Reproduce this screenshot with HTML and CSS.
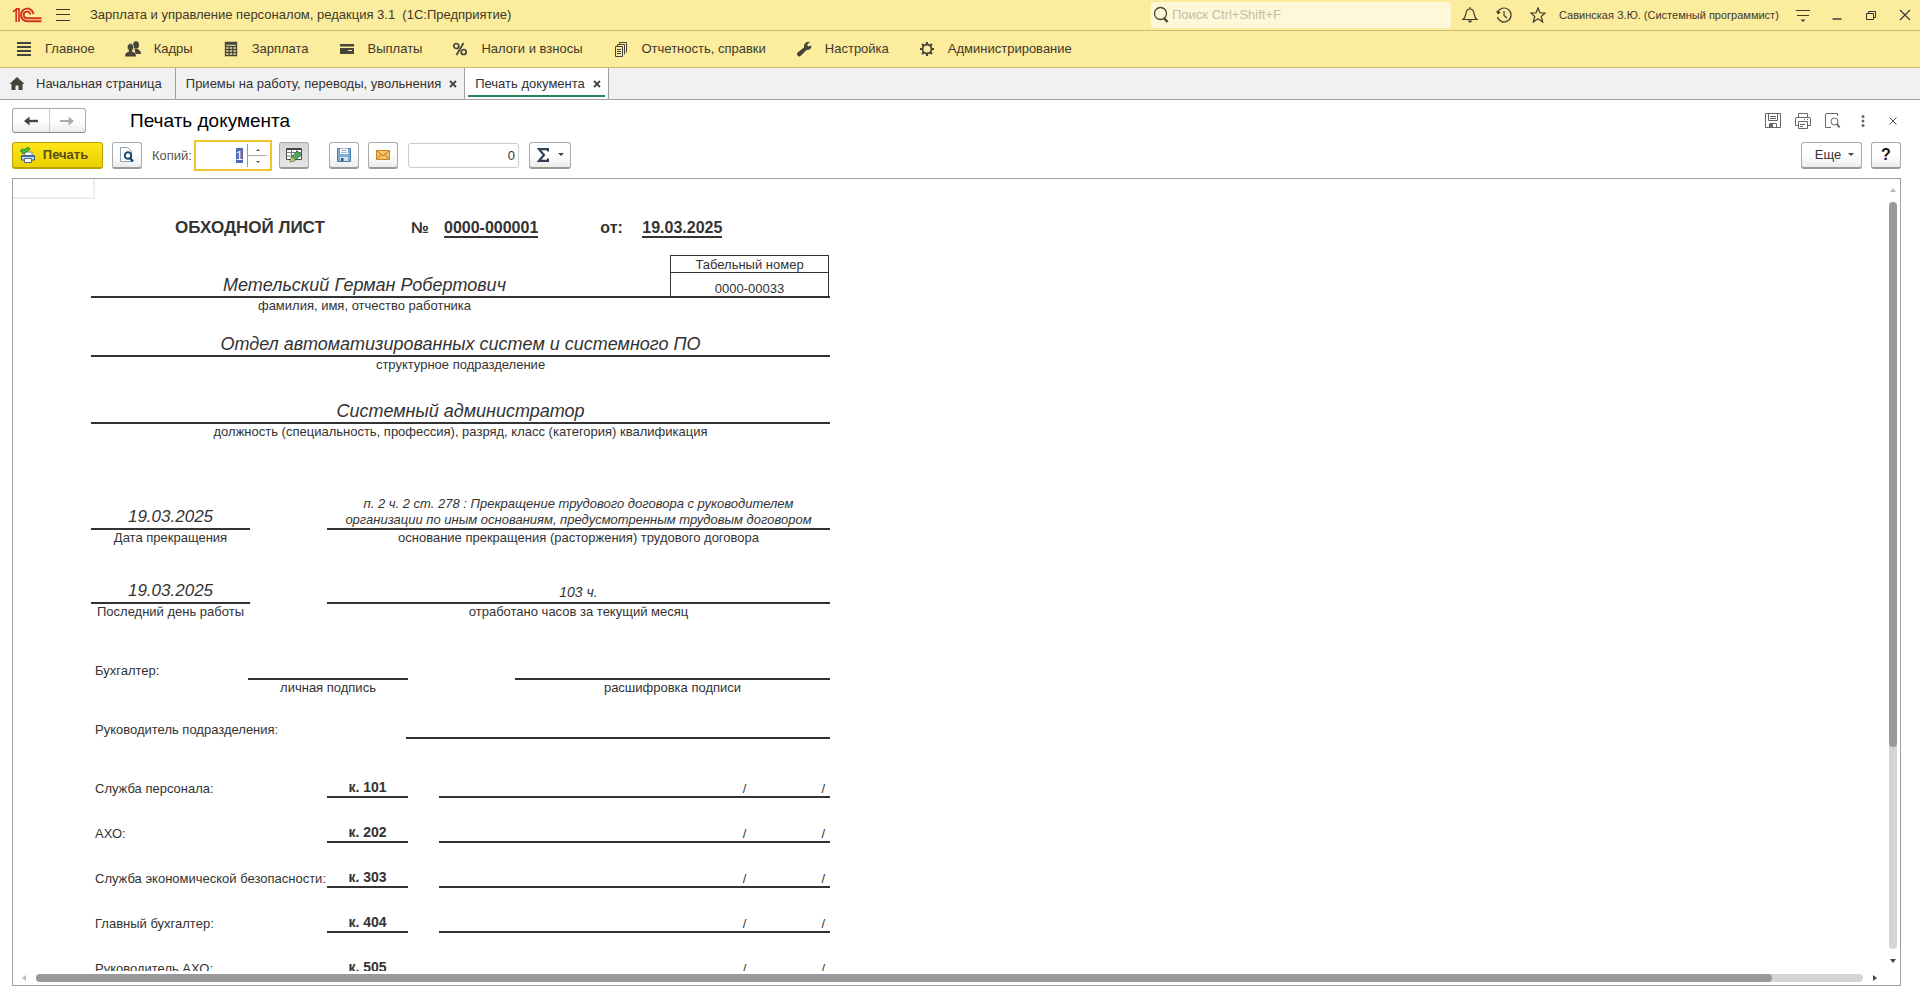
FILE: index.html
```html
<!DOCTYPE html>
<html lang="ru">
<head>
<meta charset="utf-8">
<title>Печать документа</title>
<link rel="stylesheet" href="styles.css">
</head>
<body>
<header class="titlebar">
  <svg class="logo" viewBox="0 0 30 16" width="30" height="16" fill="none" stroke="#d8321f"><path d="M1 4.800L4.200 2.200V15M4 1.800H7V15" stroke-width="1.700"/><path d="M21.500 7A6.300 6.300 0 1 0 15.200 14.200H29.500" stroke-width="2"/><path d="M18.300 7.500A3.300 3.300 0 1 0 15.200 11.200H29.500" stroke-width="1.900"/></svg>
  <button class="plain burger" aria-label="Меню"><svg viewBox="0 0 14 14" width="14" height="14" stroke="#3a3728"><path d="M0 1.500H14M0 6.500H14M0 12.500H14"/></svg></button>
  <h1 class="app-title">Зарплата и управление персоналом, редакция 3.1&nbsp; (1С:Предприятие)</h1>
  <label class="search"><svg viewBox="0 0 16 18" width="16" height="18" fill="none" stroke="#4a4632"><circle cx="7.500" cy="7.500" r="6" stroke-width="1.300"/><path d="M11 12L14.500 16" stroke-width="2.500"/></svg><input type="text" placeholder="Поиск Ctrl+Shift+F" aria-label="Поиск"></label>
  <nav class="sys">
    <button class="plain" aria-label="Уведомления"><svg viewBox="0 0 16 16" width="16" height="16" fill="none" stroke="#3f3c2c" stroke-width="1.200"><path d="M1 12.500C3.500 10.500 3.500 9 4 6C4.500 3.500 6 2 8 2S11.500 3.500 12 6C12.500 9 12.500 10.500 15 12.500ZM8 0V2"/><path d="M5.500 13.500H10.500L8 16Z" fill="#3f3c2c" stroke="none"/></svg></button>
    <button class="plain" aria-label="История"><svg viewBox="0 0 16 16" width="16" height="16" fill="none" stroke="#3f3c2c" stroke-width="1.200"><path d="M1.500 5.500A7 7 0 1 1 1.300 10M8 4V8.500L11 11"/><path d="M0 4L2 7.500L5 5Z" fill="#3f3c2c" stroke="none"/></svg></button>
    <button class="plain" aria-label="Избранное"><svg viewBox="0 0 16 16" width="16" height="16" fill="none" stroke="#3f3c2c" stroke-width="1.200"><path d="M8 1L10 6H15.200L11.200 9.500L12.700 15L8 11.800L3.300 15L4.800 9.500L.8 6H6Z"/></svg></button>
  </nav>
  <span class="user">Савинская З.Ю. (Системный программист)</span>
  <nav class="sys">
    <button class="plain" aria-label="Настройки"><svg viewBox="0 0 16 16" width="16" height="16" stroke="#3f3c2c"><path d="M1 3.500H15M2 8.500H14"/><path d="M5.500 12.500H10.500L8 15Z" fill="#3f3c2c" stroke="none"/></svg></button>
    <button class="plain" aria-label="Свернуть"><svg viewBox="0 0 16 16" width="16" height="16" stroke="#333" stroke-width="1.400"><path d="M3.500 12H12.500"/></svg></button>
    <button class="plain" aria-label="Восстановить"><svg viewBox="0 0 16 16" width="16" height="16" fill="none" stroke="#333"><path d="M3.500 6.500H10.500V12.500H3.500ZM5.500 6V4.500H12.500V10.500H11"/></svg></button>
    <button class="plain" aria-label="Закрыть"><svg viewBox="0 0 16 16" width="16" height="16" stroke="#333" stroke-width="1.100"><path d="M3 3L13 13M13 3L3 13"/></svg></button>
  </nav>
</header>

<nav class="menu">
  <a href="#"><svg viewBox="0 0 16 16" width="16" height="16" stroke="#45433a" stroke-width="2"><path d="M1 2H15M1 6H15M1 10H15M1 14H15"/></svg>Главное</a>
  <a href="#"><svg viewBox="0 0 16 16" width="16" height="16" fill="#45433a"><ellipse cx="11" cy="4" rx="3" ry="3.800"/><path d="M9.500 8H12.500Q16 9.500 16 13H10.500Z"/><ellipse cx="5.500" cy="6.200" rx="3.200" ry="3.800" stroke="#fbec9e" stroke-width=".7"/><path d="M4 9H7V10.500Q11 11.500 11 15.500H0Q0 11.500 4 10.500Z"/></svg>Кадры</a>
  <a href="#"><svg viewBox="0 0 16 16" width="16" height="16" fill="none" stroke="#45433a" stroke-width="1.300"><path d="M2.500 1.500H13.500V14.500H2.500ZM2.500 3H13.500M2.500 5.500H13.500M2.500 8.500H13.500M2.500 11.500H13.500M6.200 5V14.500M9.800 5V14.500"/></svg>Зарплата</a>
  <a href="#"><svg viewBox="0 0 16 16" width="16" height="16" fill="#45433a"><path d="M1 3H15V5.500H1ZM1 7H15V13H1Z"/><path d="M9 9.500H13" stroke="#fbec9e"/></svg>Выплаты</a>
  <a href="#"><svg viewBox="0 0 16 16" width="16" height="16" fill="none" stroke="#45433a" stroke-width="1.700"><circle cx="4.300" cy="5" r="2.500"/><circle cx="11.700" cy="11" r="2.500"/><path d="M11.500 2L4.500 14"/></svg>Налоги и взносы</a>
  <a href="#"><svg viewBox="0 0 16 16" width="16" height="16" fill="none" stroke="#45433a"><path d="M2.500 5.500H9.500V15.500H2.500ZM4.500 5V3.500H11.500V13.500M6.500 3V1.500H13.500V11.500M4 8.500H8M4 10.500H8M4 12.500H8"/></svg>Отчетность, справки</a>
  <a href="#"><svg viewBox="0 0 16 16" width="16" height="16" fill="#45433a"><path d="M1 12L8 6.500Q7.500 2 12 .8L14 1L11.200 3.500L12 5.500L15.500 4.500Q15.500 9 10.500 9L4 15.500Q1 16 1 12Z"/></svg>Настройка</a>
  <a href="#"><svg viewBox="0 0 16 16" width="16" height="16" fill="none" stroke="#45433a"><circle cx="8" cy="8" r="4.500" stroke-width="1.800"/><path d="M8 1V4M8 12V15M1 8H4M12 8H15M3 3L5 5M11 11L13 13M13 3L11 5M5 11L3 13" stroke-width="2"/></svg>Администрирование</a>
</nav>

<nav class="tabs">
  <a class="tab home" href="#"><svg viewBox="0 0 16 16" width="16" height="16" fill="#45433a"><path d="M8 1L15.500 8H13.500V14H9.500V9.500H6.500V14H2.500V8H.5Z"/></svg>Начальная страница</a>
  <div class="tab"><a href="#">Приемы на работу, переводы, увольнения</a><button class="plain" aria-label="Закрыть вкладку"><svg viewBox="0 0 8 8" width="8" height="8" stroke="#444" stroke-width="1.800"><path d="M1 1L7 7M7 1L1 7"/></svg></button></div>
  <div class="tab active"><a href="#">Печать документа</a><button class="plain" aria-label="Закрыть вкладку"><svg viewBox="0 0 8 8" width="8" height="8" stroke="#444" stroke-width="1.800"><path d="M1 1L7 7M7 1L1 7"/></svg></button></div>
</nav>

<main class="page">
  <div class="head">
    <div class="history">
      <button aria-label="Назад"><svg viewBox="0 0 16 12" width="16" height="12" stroke="#444" fill="#444"><path d="M5 6H15" stroke-width="2.400"/><path d="M1 6L6.500 1.500V10.500Z" stroke="none"/></svg></button>
      <button aria-label="Вперед"><svg viewBox="0 0 16 12" width="16" height="12" stroke="#aaa" fill="#aaa"><path d="M1 6H11" stroke-width="2"/><path d="M15 6L9.500 1.500V10.500Z" stroke="none"/></svg></button>
    </div>
    <h2>Печать документа</h2>
    <div class="head-tools">
      <button class="plain" aria-label="Сохранить"><svg viewBox="0 0 16 16" width="16" height="16" fill="none" stroke="#666"><path d="M.5.500H15.500V14.500H.5ZM3.500.500V7.500H12.500V.500M5 3.500H11M5 5.500H11M4.500 14V10.500H11.500V14"/><path d="M5 11H8V14H5Z" fill="#666" stroke="none"/></svg></button>
      <button class="plain" aria-label="Печать"><svg viewBox="0 0 16 16" width="16" height="16" fill="none" stroke="#666"><path d="M3.500 4V.500H12.500V4M3.500 12.500H.5V6Q.5 4.500 2 4.500H14Q15.500 4.500 15.500 6V12.500H12.500M3.500 8.500H12.500V15.500H3.500ZM5 11.500H10M5 13.500H8M9 6.500H10M12 6.500H13"/></svg></button>
      <button class="plain" aria-label="Просмотр"><svg viewBox="0 0 16 16" width="16" height="16" fill="none" stroke="#666"><path d="M12.500 3V.500H2Q.5.500.5 2V14.500H6"/><circle cx="9.500" cy="8.500" r="3.500"/><path d="M12 11L14.500 14.500" stroke-width="2"/></svg></button>
      <button class="plain" aria-label="Дополнительно"><svg viewBox="0 0 16 16" width="16" height="16" fill="#666"><circle cx="8" cy="3.500" r="1.500"/><circle cx="8" cy="8" r="1.500"/><circle cx="8" cy="12.500" r="1.500"/></svg></button>
      <button class="plain" aria-label="Закрыть"><svg viewBox="0 0 16 16" width="16" height="16" stroke="#555"><path d="M4.500 4.500L11.500 11.500M11.500 4.500L4.500 11.500"/></svg></button>
    </div>
  </div>

  <div class="toolbar">
    <button class="btn print"><svg viewBox="0 0 16 16" width="16" height="16"><path d="M5 5H12V9H5Z" fill="#fff" stroke="#6d88a8"/><path d="M1.500 8.500H14.500V13H1.500Z" fill="#c9dcee" stroke="#2f5580"/><path d="M2 8H14V10H2Z" fill="#3f6c9b"/><path d="M4.500 11.500H11.500V15.500H4.500Z" fill="#fff" stroke="#4a6c92"/><path d="M1 2.500L3.500 5L9.500 .8" fill="none" stroke="#1f7d22" stroke-width="3.600"/><path d="M1 2.500L3.500 5L9.500 .8" fill="none" stroke="#4cc23f" stroke-width="1.800"/></svg>Печать</button>
    <button class="btn icon" aria-label="Предварительный просмотр"><svg viewBox="0 0 16 16" width="16" height="16" fill="none"><path d="M1.500.500H8.500L12.500 4V14.500H1.500Z" fill="#fff" stroke="#8aa0b4"/><circle cx="9" cy="8.500" r="3.200" stroke="#174b73" stroke-width="2"/><path d="M11 11L14 14.500" stroke="#174b73" stroke-width="2.500"/></svg></button>
    <label class="copies-label" for="copies">Копий:</label>
    <div class="copies">
      <input id="copies" type="text" value="1">
      <div class="spin"><button class="plain" aria-label="Больше"><svg viewBox="0 0 6 4" width="6" height="4" fill="#555"><path d="M1 3H5L3 1Z"/></svg></button><button class="plain" aria-label="Меньше"><svg viewBox="0 0 6 4" width="6" height="4" fill="#555"><path d="M1 1H5L3 3Z"/></svg></button></div>
    </div>
    <button class="btn icon pressed" aria-label="Редактирование"><svg viewBox="0 0 16 16" width="16" height="16" fill="none"><path d="M.5 1.500H15.500V12.500H.5Z" fill="#fff" stroke="#444"/><path d="M1 2.500H15" stroke="#444"/><path d="M.5 5.500H15.500M.5 9H15.500M5.500 2.500V12.500M10.500 2.500V12.500" stroke="#777"/><path d="M4 15L5.500 10L11.500 4L15 7.500L9 13.500Z" fill="#4faa55" stroke="#256b31"/><path d="M4 15L5.500 10L9 13.500Z" fill="#e5b27a"/></svg></button>
    <button class="btn icon gap" aria-label="Сохранить"><svg viewBox="0 0 16 16" width="16" height="16"><path d="M1.500 1.500H14.500V14.500H1.500Z" fill="#7eabd4" stroke="#4e7ba8"/><path d="M4 1.500H12V7H4Z" fill="#fff"/><path d="M5 3.500H11M5 5.500H11" stroke="#9cb7d0"/><path d="M4 10H12V14H4Z" fill="#cfdfec"/><path d="M5 11H7.500V14H5Z" fill="#35597e"/></svg></button>
    <button class="btn icon" aria-label="Отправить"><svg viewBox="0 0 16 16" width="16" height="16"><path d="M1.500 3.500H14.500V12.500H1.500Z" fill="#f7c164" stroke="#c98722"/><path d="M2 4L8 9L14 4M2 12L6 7.500M14 12L10 7.500" fill="none" stroke="#9c6a1e" stroke-width=".8"/></svg></button>
    <input class="sum" type="text" value="0" aria-label="Сумма">
    <button class="btn sigma" aria-label="Вычислить"><svg viewBox="0 0 12 14" width="12" height="14" fill="none" stroke="#2f4254"><path d="M11 3.500V1.200H2L7 7L2 12.800H11V10.500" stroke-width="2.200"/></svg><svg class="caret" viewBox="0 0 6 4" width="6" height="4" fill="#444"><path d="M0 0H6L3 3Z"/></svg></button>
    <button class="btn more">Еще<svg class="caret" viewBox="0 0 6 4" width="6" height="4" fill="#444"><path d="M0 0H6L3 3Z"/></svg></button>
    <button class="btn icon help">?</button>
  </div>

  <section class="viewer">
    <div class="doc">
      <div class="cursor-cell"></div>
      <div class="sheet">
        <div class="doc-head">
          <span class="doc-name">ОБХОДНОЙ ЛИСТ</span><span class="doc-no">№</span><span class="ul doc-num">0000-000001</span><span class="doc-from">от:</span><span class="ul">19.03.2025</span>
        </div>
        <div class="person">
          <div class="person-name">Метельский Герман Робертович</div>
          <div class="tabno"><div class="tabno-label">Табельный номер</div><div class="tabno-value">0000-00033</div></div>
        </div>
        <div class="caption person-caption">фамилия, имя, отчество работника</div>
        <div class="field g-s"><div class="value">Отдел автоматизированных систем и системного ПО</div><div class="caption">структурное подразделение</div></div>
        <div class="field g-m"><div class="value">Системный администратор</div><div class="caption">должность (специальность, профессия), разряд, класс (категория) квалификация</div></div>
        <div class="pair g-xl">
          <div class="field"><div class="value date">19.03.2025</div><div class="caption">Дата прекращения</div></div>
          <div class="field"><div class="value small">п. 2 ч. 2 ст. 278 : Прекращение трудового договора с руководителем<br>организации по иным основаниям, предусмотренным трудовым договором</div><div class="caption">основание прекращения (расторжения) трудового договора</div></div>
        </div>
        <div class="pair g-l">
          <div class="field"><div class="value date">19.03.2025</div><div class="caption">Последний день работы</div></div>
          <div class="field"><div class="value hours">103 ч.</div><div class="caption">отработано часов за текущий месяц</div></div>
        </div>
        <div class="sign g-xm">
          <div class="label">Бухгалтер:</div>
          <div class="field"><div class="value"></div><div class="caption">личная подпись</div></div>
          <div class="field"><div class="value"></div><div class="caption">расшифровка подписи</div></div>
        </div>
        <div class="chief g-s"><div class="label">Руководитель подразделения:</div><div class="value"></div></div>
        <div class="rows">
          <div class="row"><div class="label">Служба персонала:</div><div class="room">к. 101</div><div class="mark"><span>/</span><span>/</span></div></div>
          <div class="row"><div class="label">АХО:</div><div class="room">к. 202</div><div class="mark"><span>/</span><span>/</span></div></div>
          <div class="row"><div class="label">Служба экономической безопасности:</div><div class="room">к. 303</div><div class="mark"><span>/</span><span>/</span></div></div>
          <div class="row"><div class="label">Главный бухгалтер:</div><div class="room">к. 404</div><div class="mark"><span>/</span><span>/</span></div></div>
          <div class="row"><div class="label">Руководитель АХО:</div><div class="room">к. 505</div><div class="mark"><span>/</span><span>/</span></div></div>
        </div>
      </div>
    </div>
    <div class="vbar"><svg viewBox="0 0 6 4" width="6" height="4" fill="#bbb"><path d="M0 4H6L3 0Z"/></svg><div class="track"><div class="thumb"></div></div><svg viewBox="0 0 6 4" width="6" height="4" fill="#444"><path d="M0 0H6L3 4Z"/></svg></div>
    <div class="hbar"><svg viewBox="0 0 4 6" width="4" height="6" fill="#bbb"><path d="M4 0V6L0 3Z"/></svg><div class="track"><div class="thumb"></div></div><svg viewBox="0 0 4 6" width="4" height="6" fill="#444"><path d="M0 0V6L4 3Z"/></svg></div>
  </section>
</main>
<script src="script.js"></script>
</body>
</html>
```
FILE: script.js
```js
document.getElementById('copies').select();
```
FILE: styles.css
```css
* { box-sizing: border-box; }
body {
  margin: 0;
  height: 100vh;
  display: flex;
  flex-direction: column;
  overflow: hidden;
  background: #fff;
  color: #333;
  font: 13px/16px "Liberation Sans", Arial, sans-serif;
}
h1, h2 { margin: 0; font-weight: normal; }
a { color: inherit; text-decoration: none; }
svg { display: block; flex: none; }
button, input { font: inherit; color: inherit; }
.plain { display: flex; align-items: center; justify-content: center; padding: 0; border: 0; background: none; }

.titlebar { display: flex; align-items: center; height: 31px; padding-right: 7px; background: #fbec9e; border-bottom: 1px solid #c9bc74; }
.logo { margin-left: 12px; }
.burger { margin: 0 20px 0 14px; }
.app-title { font-size: 13px; color: #40392a; }
.search { display: flex; align-items: center; gap: 3px; width: 300px; height: 26px; margin-left: auto; padding-left: 2px; background: #fef7d8; border-radius: 3px; }
.search input { flex: 1; min-width: 0; padding: 0; border: 0; background: none; outline: 0; }
.search input::placeholder { color: #c3bda6; opacity: 1; }
.sys { display: flex; gap: 18px; }
.search + .sys { margin-left: 11px; }
.user { margin: 0 13px; width: 223px; white-space: nowrap; font-size: 11px; color: #40392a; }

.menu { display: flex; align-items: center; gap: 30px; height: 37px; padding-left: 16px; background: #fbec9e; border-bottom: 1px solid #c9bc74; color: #40392a; }
.menu a { display: flex; align-items: center; gap: 13px; }

.tabs { display: flex; height: 32px; background: #f1f1f1; border-bottom: 1px solid #a0a0a0; }
.tab { position: relative; display: flex; align-items: center; gap: 8px; padding: 0 7px 0 10px; border-right: 1px solid #a0a0a0; }
.tab.home { gap: 11px; padding: 0 13px 0 9px; }
.tab.active { background: #fff; }
.tab.active::after { content: ""; position: absolute; left: 3px; right: 3px; bottom: 2px; height: 2px; background: #2a8458; }

.page { flex: 1; min-height: 0; display: flex; flex-direction: column; padding: 8px 19px 12px 12px; }
.head { display: flex; align-items: center; height: 25px; }
.history { display: flex; width: 74px; height: 25px; border: 1px solid #aaa; border-bottom-color: #888; border-radius: 3px; background: linear-gradient(#fff 50%, #ececec); }
.history button { flex: 1; display: flex; align-items: center; justify-content: center; padding: 0; border: 0; background: none; }
.history button + button { border-left: 1px solid #ccc; }
.head h2 { margin-left: 44px; font-size: 19px; line-height: 24px; color: #000; }
.head-tools { display: flex; gap: 14px; margin-left: auto; }

.toolbar { display: flex; align-items: center; height: 31px; margin: 7px 0; }
.btn { display: flex; align-items: center; justify-content: center; height: 27px; padding: 0; border: 1px solid #aaa; border-bottom: 2px solid #999; border-radius: 3px; background: linear-gradient(#fff 50%, #ececec); }
.icon { width: 30px; margin-left: 9px; }
.print { width: 91px; gap: 7px; padding-right: 7px; font-weight: bold; color: #574d16; background: linear-gradient(#ffe51a, #ecd100); border-color: #b9a300; }
.pressed { margin-left: 7px; background: linear-gradient(#d4d4d4, #e6e6e6); }
.gap { margin-left: 20px; }
.copies-label { margin-left: 10px; width: 42px; color: #555; }
.copies { display: flex; align-items: center; width: 78px; height: 31px; border: 2px solid #eec62c; background: #fff; }
.copies input { flex: 1; min-width: 0; height: 20px; padding: 0 4px; border: 0; outline: 0; text-align: right; }
.copies input::selection { background: #5568b4; color: #fff; }
.spin { display: flex; flex-direction: column; width: 20px; height: 23px; margin-right: 3px; border-left: 1px solid #999; }
.spin button { flex: 1; }
.spin button + button { border-top: 1px solid #aaa; }
.sum { width: 111px; height: 25px; margin: 0 10px; padding: 0 3px; border: 1px solid #ccc; border-radius: 3px; text-align: right; }
.sigma { width: 42px; gap: 9px; }
.more { width: 61px; gap: 7px; margin-left: auto; padding-left: 6px; }
.help { color: #111; font-size: 16px; font-weight: bold; }

.viewer { flex: 1; min-height: 0; display: grid; grid-template: 1fr 14px / 1fr 14px; border: 1px solid #a0a0a0; }
.doc { min-height: 0; overflow: hidden; }
.cursor-cell { width: 82px; height: 20px; border: solid #eee; border-width: 0 2px 2px 0; }
.sheet { width: 739px; margin-left: 78px; font-size: 13px; color: #333; white-space: nowrap; }
.doc-head { display: flex; align-items: flex-end; height: 39px; padding-left: 84px; font-size: 16px; line-height: 16px; font-weight: bold; }
.doc-head span { border-bottom: 2px solid transparent; }
.doc-head .ul { border-color: #333; }
.doc-head .doc-name { width: 236px; font-size: 17px; }
.doc-no { width: 33px; }
.doc-num { margin-right: 62px; }
.doc-from { width: 42px; }
.person { display: flex; height: 43px; margin-top: 17px; border-bottom: 2px solid #333; }
.person-name { width: 547px; align-self: flex-end; text-align: center; font: italic 18px/22px "Liberation Sans", Arial, sans-serif; }
.tabno { width: 159px; margin: 0 1px 0 auto; border: solid #333; border-width: 1px 1px 0; text-align: center; }
.tabno-label { height: 17px; line-height: 18px; border-bottom: 1px solid #333; }
.tabno-value { line-height: 32px; height: 23px; }
.caption { height: 16px; text-align: center; line-height: 16px; }
.person-caption { width: 547px; }
.value { display: flex; align-items: flex-end; justify-content: center; min-height: 26px; border-bottom: 2px solid #333; font: italic 18px/22px "Liberation Sans", Arial, sans-serif; text-align: center; }
.value.small { font-size: 13px; line-height: 16px; }
.value.date { font-size: 17px; }
.value.hours { font-size: 14px; line-height: 20px; }
.g-s { margin-top: 17px; }
.g-m { margin-top: 25px; }
.g-l { margin-top: 32px; }
.g-xm { margin-top: 34px; }
.g-xl { margin-top: 56px; }
.pair { display: grid; grid-template-columns: 159px 503px; justify-content: space-between; align-items: end; }
.label { padding-left: 4px; }
.sign { display: grid; grid-template-columns: 157px 160px 107px 315px; }
.sign .label { padding-top: 9px; }
.sign .field:last-child { grid-column: 4; }
.chief { display: grid; grid-template-columns: 1fr 424px; align-items: end; }
.chief .label { padding-bottom: 1px; }
.rows { padding-top: 14px; }
.row { display: grid; grid-template-columns: 236px 81px 1fr; align-items: end; height: 45px; }
.row .label { padding-bottom: 1px; }
.room, .mark { height: 45px; padding-top: 26px; border-bottom: 2px solid #333; }
.room { font-size: 14px; font-weight: bold; text-align: center; }
.mark { display: flex; justify-content: flex-end; gap: 75px; margin-left: 31px; padding-right: 5px; padding-top: 28px; }

.track { flex: 1; border-radius: 4px; background: #d5d5d5; }
.thumb { border-radius: 4px; background: #999; }
.vbar { display: flex; flex-direction: column; align-items: center; gap: 10px; padding: 9px 0 8px; }
.vbar .track { width: 8px; }
.vbar .thumb { height: 73%; }
.hbar { display: flex; align-items: center; gap: 10px; padding: 0 9px; }
.hbar .track { height: 8px; }
.hbar .thumb { width: 95%; height: 8px; }
```
